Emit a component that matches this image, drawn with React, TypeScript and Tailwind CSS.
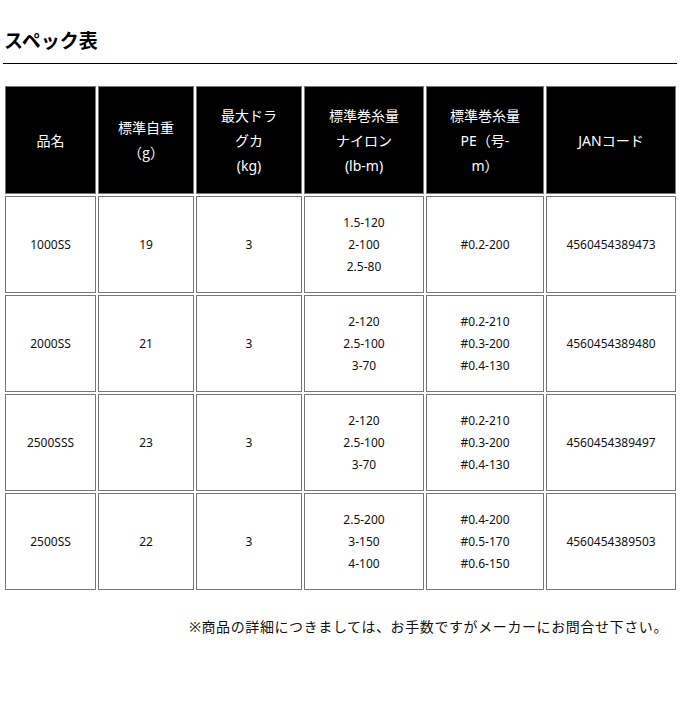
import React from "react";

type Spec = {
  name: string;
  weight: string;
  drag: string;
  nylon: string[];
  pe: string[];
  jan: string;
};

const specs: Spec[] = [
  { name: "1000SS", weight: "19", drag: "3", nylon: ["1.5-120", "2-100", "2.5-80"], pe: ["#0.2-200"], jan: "4560454389473" },
  { name: "2000SS", weight: "21", drag: "3", nylon: ["2-120", "2.5-100", "3-70"], pe: ["#0.2-210", "#0.3-200", "#0.4-130"], jan: "4560454389480" },
  { name: "2500SSS", weight: "23", drag: "3", nylon: ["2-120", "2.5-100", "3-70"], pe: ["#0.2-210", "#0.3-200", "#0.4-130"], jan: "4560454389497" },
  { name: "2500SS", weight: "22", drag: "3", nylon: ["2.5-200", "3-150", "4-100"], pe: ["#0.4-200", "#0.5-170", "#0.6-150"], jan: "4560454389503" },
];

const th = "border border-[#777] bg-black text-white text-[14px] leading-[25px] font-normal text-center align-middle";
const td = "border border-[#777] bg-white text-[#111] text-[12px] leading-[22px] text-center align-middle";

const Lines = ({ items }: { items: string[] }) => (
  <>
    {items.map((t) => (
      <div key={t}>{t}</div>
    ))}
  </>
);

export default function App() {
  return (
    <div
      className="w-[680px] min-h-[709px] bg-white px-[3px]"
      style={{ fontFamily: '"Noto Sans", "Noto Sans CJK JP", sans-serif' }}
    >
      {/* Heading */}
      <h2 className="pt-[28px] pb-[8px] pl-[1px] text-[19px] leading-[27px] font-bold text-black border-b border-black">
        スペック表
      </h2>

      {/* Spec table */}
      <table className="mt-[20px] border-separate border-spacing-[2px] table-fixed w-[675px]">
        <colgroup>
          <col className="w-[91px]" />
          <col className="w-[96px]" />
          <col className="w-[106px]" />
          <col className="w-[120px]" />
          <col className="w-[118px]" />
          <col className="w-[130px]" />
        </colgroup>
        <thead>
          <tr className="h-[108px]">
            <th className={th}>品名</th>
            <th className={th}>
              標準自重
              <br />
              <span className="font-['Noto_Sans_CJK_JP',serif]">（g）</span>
            </th>
            <th className={th}>
              最大ドラ
              <br />
              グカ
              <br />
              (kg)
            </th>
            <th className={th}>
              標準巻糸量
              <br />
              ナイロン
              <br />
              (lb-m)
            </th>
            <th className={th}>
              標準巻糸量
              <br />
              PE（号-
              <br />
              m）
            </th>
            <th className={th}>JANコード</th>
          </tr>
        </thead>
        <tbody>
          {specs.map((s) => (
            <tr key={s.name} className="h-[97px]">
              <td className={td}>{s.name}</td>
              <td className={td}>{s.weight}</td>
              <td className={td}>{s.drag}</td>
              <td className={td}>
                <Lines items={s.nylon} />
              </td>
              <td className={td}>
                <Lines items={s.pe} />
              </td>
              <td className={td}>{s.jan}</td>
            </tr>
          ))}
        </tbody>
      </table>

      {/* Note */}
      <p className="mt-[24px] pr-[9px] text-right text-[14px] leading-[21px] tracking-[0.6px] text-[#111]">
        ※商品の詳細につきましては、お手数ですがメーカーにお問合せ下さい。
      </p>
    </div>
  );
}
